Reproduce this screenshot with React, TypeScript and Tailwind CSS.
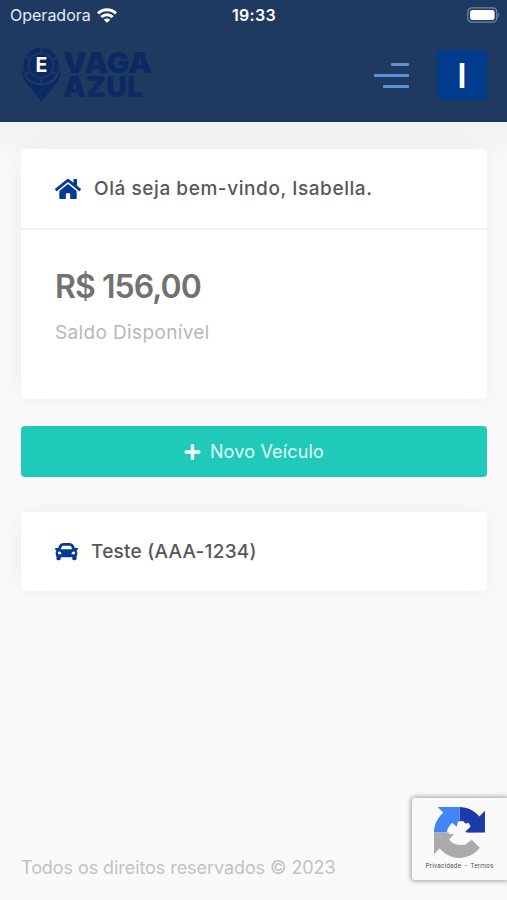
import { FaCar, FaHome, FaPlus } from "react-icons/fa";

const StatusBar = () => (
  <div className="relative flex h-[30px] items-center justify-between pl-[10px] pr-[7px] text-white">
    <div className="flex items-center gap-[6px]">
      <span className="text-[16px] leading-[30px] text-[#e3ebf6]">Operadora</span>
      <svg className="h-[15px] w-5" viewBox="0 0 20 15" fill="none" stroke="white" strokeWidth="3">
        <path d="M1 5.3a13 13 0 0 1 18 0" />
        <path d="M4.3 9a8.2 8.2 0 0 1 11.4 0" />
        <path d="M10 14.7 6.8 11.7a4.6 4.6 0 0 1 6.4 0Z" fill="white" stroke="none" />
      </svg>
    </div>
    <span className="absolute left-0 w-full pl-px text-center text-[16px] font-semibold leading-[30px] tracking-[0.3px]">
      19:33
    </span>
    <svg className="h-4 w-[33px]" viewBox="0 0 33 16">
      <rect x="0.8" y="0.8" width="29" height="14.4" rx="4.2" fill="none" stroke="#7287a5" strokeWidth="1.3" />
      <rect x="3" y="3" width="24.6" height="10" rx="2.3" fill="white" />
      <path d="M31 5.5q2 2.5 0 5Z" fill="#7287a5" />
    </svg>
  </div>
);

const Logo = () => (
  <svg className="h-14 w-[132px] overflow-visible" viewBox="0 0 132 56">
    <path d="M0.500 20Q0 29 6 37L20.500 54.500L35 37Q41 29 39.500 20Q37 38 20.500 38.500Q4 38 0.500 20Z" fill="#0b2a62" />
    <circle cx="20" cy="18.500" r="15.500" fill="none" stroke="#0b2a62" strokeWidth="4.500" strokeDasharray="14.230 2" strokeDashoffset="7" />
    <circle cx="20" cy="18.500" r="11.500" fill="#0b2a62" />
    <text x="20.500" y="25" textAnchor="middle" fontSize="19.500" fontWeight="700" fill="white">E</text>
    <g fill="#0b2a62" fontSize="29" fontWeight="900">
      <text x="42" y="25.500" textLength="89" lengthAdjust="spacingAndGlyphs">VAGA</text>
      <text x="42" y="50" textLength="80" lengthAdjust="spacingAndGlyphs">AZUL</text>
    </g>
  </svg>
);

const Header = () => (
  <header className="h-[122px] bg-[#1f3a61]">
    <StatusBar />
    <div className="flex items-center pl-[21px] pr-5 pt-[17px]">
      <Logo />
      <div className="ml-auto flex w-[35px] flex-col items-end gap-2">
        <span className="h-[3px] w-[18px] rounded-[1px] bg-[#5b90dc]" />
        <span className="h-[3px] w-[35px] rounded-[1px] bg-[#5b90dc]" />
        <span className="h-[3px] w-[26px] rounded-[1px] bg-[#5b90dc]" />
      </div>
      <div className="ml-7 flex h-[50px] w-[50px] items-center justify-center rounded-[5px] bg-[#003b8e] text-[34px] font-semibold text-white">
        I
      </div>
    </div>
  </header>
);

const Recaptcha = () => (
  <div className="absolute right-0 top-[798px] flex h-[82px] w-[95px] flex-col items-center rounded-l-[3px] bg-[#fafafa] pt-[9px] shadow-[0_0_5px_1px_#999]">
    <svg className="h-[51px] w-[51px]" viewBox="0 0 64 64">
      <path fill="#1c3aa9" d="M64 31.955l-.033-1.370V4.687l-7.160 7.160C50.948 4.674 42.033.093 32.050.093V18c4.976.393 8.288 2.140 10.828 6.124l-8.307 8.307L64 31.953" />
      <path fill="#4285f4" d="M32.050.094l-1.370.033H4.594l7.160 7.160C4.580 13.147 0 22.060 0 32.046h16.260c.393-4.976 3.140-9.288 7.124-11.828l8.666 8.307V.095" />
      <path fill="#ababab" d="M.001 32.045l.033 1.370v25.898l7.160-7.160c5.860 7.173 14.774 11.754 24.760 11.754 10.400 0 19.622-4.960 25.458-12.640l-11.736-11.860a15.550 15.550 0 0 1-4.754 5.334c-2.050 1.600-4.952 2.906-8.968 2.906-.485 0-.860-.057-1.135-.163-4.976-.393-9.288-3.140-11.828-7.124l8.307-8.307c-10.522.040-22.400.066-27.295-.005" />
      <path fill="#fafafa" d="M17 28.500l5-8 6 6 2-8 7-1 1 5 5-3 3 5-7 7 7 2 1 8-8 6-9-1-6-6 5-6-10-1Z" />
    </svg>
    <span className="mt-[3px] whitespace-nowrap font-['Roboto',sans-serif] text-[6.5px] leading-[10px] tracking-[0.18px] text-[#555]">
      Privacidade&nbsp; - &nbsp;Termos
    </span>
  </div>
);

const App = () => {
  return (
    <div className="relative flex h-[900px] w-[507px] flex-col overflow-hidden bg-[#fafafa] font-['Inter',sans-serif]">
      <Header />
      <main className="flex grow flex-col bg-linear-to-b from-[#f1f1f1] to-[#fafafa] to-[40px] pl-[21px] pr-5 pt-[27px]">
        <section className="h-[250px] rounded-[4px] bg-white shadow-[0_0_24px_rgba(0,0,0,0.06)]">
          <div className="flex h-[81px] items-center border-b-2 border-[#f1f1f2] pl-[34px]">
            <FaHome className="h-[26px] w-[26px] text-[#063a93]" />
            <h1 className="ml-[13px] whitespace-nowrap pt-[2px] text-[19px] font-medium tracking-[0.57px] text-[#575757]">
              Olá seja bem-vindo, Isabella.
            </h1>
          </div>
          <div className="pl-[34px] pt-[34px]">
            <p className="text-[32px] font-semibold leading-[46px] tracking-[-0.95px] text-[#717171]">R$ 156,00</p>
            <p className="mt-2 text-[19px] leading-[30px] tracking-[0.36px] text-[#b8b8b8]">Saldo Disponível</p>
          </div>
        </section>

        <button className="mt-[27px] flex h-[51px] shrink-0 items-center justify-center gap-[9px] rounded-[4px] bg-[#1fcab9] text-[18px] tracking-[0.18px] text-[#e3fffb]">
          <FaPlus className="h-[18px] w-[17px] text-white" />
          <span>Novo Veículo</span>
        </button>

        <section className="mt-[35px] flex h-[79px] items-center rounded-[4px] bg-white pl-[34px] shadow-[0_0_24px_rgba(0,0,0,0.06)]">
          <FaCar className="h-[23px] w-[23px] text-[#063a93]" />
          <h2 className="ml-[13px] pt-[2px] text-[19px] font-medium tracking-[0.24px] text-[#575757]">Teste (AAA-1234)</h2>
        </section>

        <footer className="mb-[17px] mt-auto text-[18px] leading-[30px] tracking-[-0.07px] text-[#c2c2c2]">
          Todos os direitos reservados © 2023
        </footer>
      </main>
      <Recaptcha />
    </div>
  );
};

export default App;
